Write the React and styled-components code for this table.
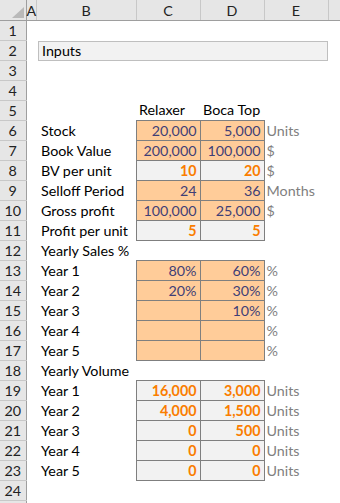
import React from 'react';
import styled, { createGlobalStyle, css } from 'styled-components';

const GlobalStyle = createGlobalStyle`
  html, body {
    margin: 0;
    padding: 0;
    background: #fff;
    overflow: hidden;
  }
  body {
    font-family: Lato, 'Liberation Sans', sans-serif;
  }
`;

const Sheet = styled.table`
  border-collapse: collapse;
  table-layout: fixed;
  width: 340px;
  font-size: 14.3px;
  color: #000;
`;

const Row = styled.tr`
  height: 20px;
`;

const ColHead = styled.th`
  height: 20px;
  padding: 0;
  background: #e6e6e6;
  border-right: 1px solid #c8c8c8;
  border-bottom: 1px solid #9e9e9e;
  font-weight: normal;
  color: #222;
  text-align: center;
  vertical-align: middle;
`;

const Corner = styled(ColHead)`
  border-right: 1px solid #9e9e9e;
`;

const CornerMark = styled.svg`
  display: block;
  margin: 6px 2px 2px auto;
`;

const RowHead = styled.th`
  padding: 0;
  background: #e6e6e6;
  border-right: 1px solid #9e9e9e;
  border-bottom: 1px solid #c8c8c8;
  font-weight: normal;
  color: #222;
  text-align: center;
  vertical-align: middle;
`;

const kinds = {
  label: css`
    padding-left: 5px;
  `,
  title: css`
    padding-left: 3px;
  `,
  input: css`
    background: #ffcc99;
    color: #3f3f76;
    border: 1px solid #7f7f7f;
    text-align: right;
    padding-right: 3px;
  `,
  calc: css`
    background: #f2f2f2;
    color: #fa7d00;
    font-weight: bold;
    border: 1px solid #7f7f7f;
    text-align: right;
    padding-right: 3px;
  `,
  unit: css`
    color: #7f7f7f;
    padding-left: 2px;
  `,
};

const Cell = styled.td`
  padding: 0;
  white-space: nowrap;
  overflow: visible;
  vertical-align: middle;
  line-height: 18px;
  ${({ $kind }) => kinds[$kind] || ''}
`;

const InputsBox = styled.div`
  margin-left: 2px;
  height: 18px;
  line-height: 18px;
  background: #f2f2f2;
  border: 1px solid #bfbfbf;
  padding-left: 3px;
`;

const columns = ['A', 'B', 'C', 'D', 'E', ''];
const widths = [26, 10, 100, 64, 64, 64, 12];

// [label, C, D, unit, kind for C/D]
const rows = {
  5: ['', 'Relaxer', 'Boca Top', '', 'plain'],
  6: ['Stock', '20,000', '5,000', 'Units', 'input'],
  7: ['Book Value', '200,000', '100,000', '$', 'input'],
  8: ['BV per unit', '10', '20', '$', 'calc'],
  9: ['Selloff Period', '24', '36', 'Months', 'input'],
  10: ['Gross profit', '100,000', '25,000', '$', 'input'],
  11: ['Profit per unit', '5', '5', '', 'calc'],
  12: ['Yearly Sales %', null, null, '', 'plain'],
  13: ['Year 1', '80%', '60%', '%', 'input'],
  14: ['Year 2', '20%', '30%', '%', 'input'],
  15: ['Year 3', '', '10%', '%', 'input'],
  16: ['Year 4', '', '', '%', 'input'],
  17: ['Year 5', '', '', '%', 'input'],
  18: ['Yearly Volume', null, null, '', 'plain'],
  19: ['Year 1', '16,000', '3,000', 'Units', 'calc'],
  20: ['Year 2', '4,000', '1,500', 'Units', 'calc'],
  21: ['Year 3', '0', '500', 'Units', 'calc'],
  22: ['Year 4', '0', '0', 'Units', 'calc'],
  23: ['Year 5', '0', '0', 'Units', 'calc'],
};

function SheetRow({ n }) {
  // the last row only peeks in at the bottom edge
  const number = n > 24 ? '' : n;
  if (n === 2) {
    return (
      <Row>
        <RowHead>{number}</RowHead>
        <Cell />
        <Cell colSpan={4}>
          <InputsBox>Inputs</InputsBox>
        </Cell>
        <Cell />
      </Row>
    );
  }
  const data = rows[n];
  if (!data) {
    return (
      <Row>
        <RowHead>{number}</RowHead>
        {columns.map((c, i) => <Cell key={i} />)}
      </Row>
    );
  }
  const [label, c, d, unit, kind] = data;
  const valueKind = kind === 'plain' ? 'title' : kind;
  return (
    <Row>
      <RowHead>{number}</RowHead>
      <Cell />
      <Cell $kind="label">{label}</Cell>
      <Cell $kind={c === null ? undefined : valueKind}>{c}</Cell>
      <Cell $kind={d === null ? undefined : valueKind}>{d}</Cell>
      <Cell $kind="unit">{unit}</Cell>
      <Cell />
    </Row>
  );
}

export default function App() {
  const numbers = Array.from({ length: 25 }, (_, i) => i + 1);
  return (
    <>
      <GlobalStyle />
      <Sheet>
        <colgroup>
          {widths.map((w, i) => <col key={i} style={{ width: w }} />)}
        </colgroup>
        <thead>
          <Row>
            <Corner>
              <CornerMark width="12" height="11" viewBox="0 0 12 11">
                <polygon points="12,0 12,11 0,11" fill="#b9b9b9" />
              </CornerMark>
            </Corner>
            {columns.map((c, i) => <ColHead key={i}>{c}</ColHead>)}
          </Row>
        </thead>
        <tbody>
          {numbers.map(n => <SheetRow key={n} n={n} />)}
        </tbody>
      </Sheet>
    </>
  );
}
